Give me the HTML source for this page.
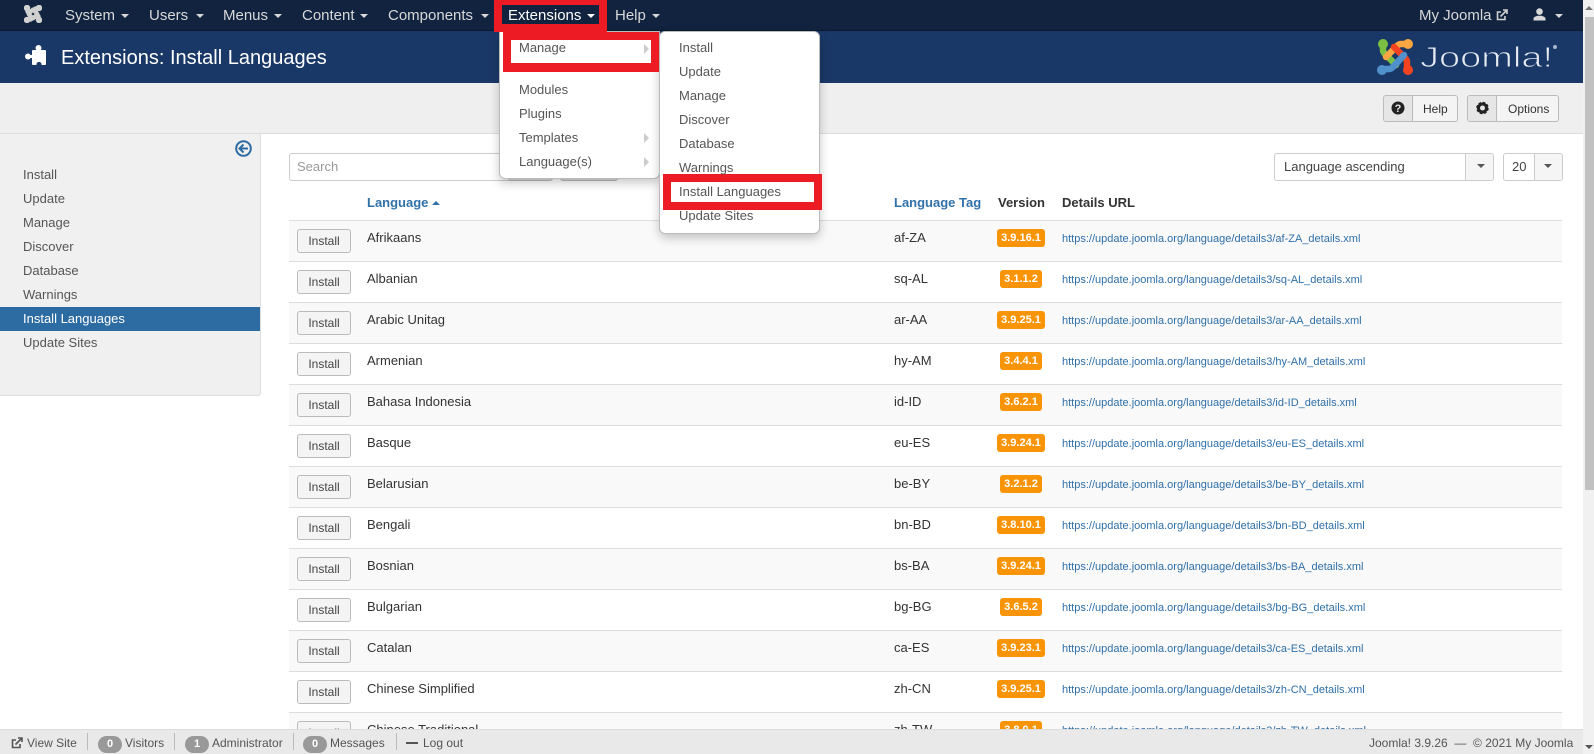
<!DOCTYPE html>
<html lang="en">
<head>
<meta charset="utf-8">
<title>Extensions: Install Languages</title>
<style>
*{box-sizing:border-box}
html,body{margin:0;padding:0;width:1594px;height:754px;overflow:hidden;background:#fff;font-family:"Liberation Sans",Arial,sans-serif;font-size:13px;color:#333}
.a{position:absolute;white-space:nowrap}
#nav{position:absolute;left:0;top:0;width:1583px;height:31px;background:#12233f;border-bottom:1px solid #0c1a30}
.n{position:absolute;top:7px;font-size:15px;line-height:18px;color:#d8d8d8;white-space:nowrap}
.car{position:absolute;width:0;height:0;border-left:4px solid transparent;border-right:4px solid transparent;border-top:4px solid #d8d8d8}
#head{position:absolute;left:0;top:31px;width:1583px;height:52px;background:#1a3867}
#tool{position:absolute;left:0;top:83px;width:1583px;height:51px;background:#efefef;border-bottom:1px solid #ddd}
#side{position:absolute;left:0;top:134px;width:261px;height:262px;background:#f0f0f0;border-right:1px solid #ddd;border-bottom:1px solid #ddd;border-bottom-right-radius:3px}
.si{position:absolute;left:23px;font-size:13px;line-height:18px;color:#555;white-space:nowrap}
.box{position:absolute;border:1px solid #ccc;border-radius:3px;background:#fff}
.tb{position:absolute;top:95px;height:27px;border:1px solid #bbb;border-radius:3px;background:#f4f4f4;font-size:12px;line-height:27px;color:#333;overflow:hidden;white-space:nowrap}
.tb i{position:absolute;left:0;top:0;width:29px;height:25px;background:#e6e6e6;border-right:1px solid #bbb}
.tb span{position:absolute}
#rows{position:absolute;left:289px;top:220px;width:1273px}
.r{position:relative;height:41px;border-top:1px solid #ddd;background:#fff}
.r.o{background:#f9f9f9}
.r b,.r span,.r em,.r u{position:absolute;white-space:nowrap;font-style:normal;text-decoration:none}
.r b{left:8px;top:8px;width:54px;height:24px;border:1px solid #bbb;border-radius:3px;background:#f4f4f4;font-weight:400;font-size:12px;line-height:23px;text-align:center;color:#444}
.r span{top:8px;line-height:17px;font-size:13px;color:#333}
.r em{left:708px;top:8px;height:18px;width:48px;background:#f89406;border-radius:3px;color:#fff;font-weight:700;font-size:11px;line-height:18px;text-align:center}
.r em.s{left:711px;width:42px}
.r u{left:773px;top:10px;font-size:11px;line-height:16px;color:#2f6fa8}
.th{position:absolute;top:194px;font-size:13px;font-weight:700;line-height:18px;white-space:nowrap;color:#333}
.th.l{color:#3071a9}
#foot{position:absolute;left:0;top:729px;width:1583px;height:25px;background:#e9e9e9;border-top:1px solid #ddd;z-index:5;font-size:12px;color:#555}
.f{position:absolute;top:5px;line-height:16px;white-space:nowrap}
.fd{position:absolute;top:3px;width:1px;height:17px;background:#bbb}
.fb{position:absolute;top:6px;width:24px;height:17px;border-radius:9px;background:#999;color:#fff;font-weight:700;font-size:11px;line-height:17px;text-align:center}
#sb{position:absolute;left:1583px;top:0;width:11px;height:754px;background:#f1f1f1;z-index:6}
.dd{position:absolute;background:#fff;border:1px solid #bbb;border-radius:0 0 6px 6px;box-shadow:0 4px 10px rgba(0,0,0,.22);z-index:10}
.di{position:absolute;font-size:13px;line-height:18px;color:#555;white-space:nowrap;z-index:13}
.ar{position:absolute;width:0;height:0;border-top:5px solid transparent;border-bottom:5px solid transparent;border-left:5px solid #ccc;z-index:13}
.red{position:absolute;background:#ed1c24}
</style>
</head>
<body>

<div id="nav"></div>
<svg class="a" style="left:24px;top:5px;z-index:2" width="18" height="18" viewBox="0 0 36 36" fill="none" stroke="#d0d0d0" stroke-width="7" stroke-linecap="round"><path d="M6 6V12Q6 14 8 16L19 27"/><path d="M30 6H24Q22 6 20 8L9 19"/><path d="M30 30V24Q30 22 28 20L17 9"/><path d="M6 30H12Q14 30 16 28L27 17"/><circle cx="6" cy="6" r="3"/><circle cx="30" cy="6" r="3"/><circle cx="30" cy="30" r="3"/><circle cx="6" cy="30" r="3"/><path d="M10 10H26V26H10Z" stroke-width="4" stroke-linecap="butt"/></svg>
<div class="n" style="left:65px">System</div><div class="car" style="left:121px;top:14px"></div>
<div class="n" style="left:149px">Users</div><div class="car" style="left:196px;top:14px"></div>
<div class="n" style="left:223px">Menus</div><div class="car" style="left:274px;top:14px"></div>
<div class="n" style="left:302px">Content</div><div class="car" style="left:360px;top:14px"></div>
<div class="n" style="left:388px">Components</div><div class="car" style="left:481px;top:14px"></div>
<div class="n" style="left:615px">Help</div><div class="car" style="left:652px;top:14px"></div>
<div class="n" style="left:1419px">My Joomla</div>
<svg class="a" style="left:1496px;top:9px" width="12" height="12" viewBox="0 0 12 12" fill="none" stroke="#d0d0d0" stroke-width="1.6"><path d="M9 7V10.5H1.5V3H5"/><path d="M4.5 7.5L10.5 1.5M7 1H11V5"/></svg>
<svg class="a" style="left:1533px;top:8px" width="13" height="13" viewBox="0 0 13 13" fill="#d8d8d8"><circle cx="6.500" cy="3.600" r="3.300"/><path d="M0.500 12.500V10.500Q0.500 8.800 4.500 7.700H8.500Q12.500 8.800 12.500 10.500V12.500Z"/></svg>
<div class="car" style="left:1555px;top:14px"></div>

<div id="head"></div>
<svg class="a" style="left:25px;top:45px" width="21" height="20" viewBox="0 0 21 20" fill="#fff"><rect x="7" y="5" width="14" height="15" rx="1"/><circle cx="13.500" cy="3" r="3"/><circle cx="3" cy="11.500" r="3"/><rect x="3" y="10" width="6" height="3"/><circle cx="14" cy="19.500" r="2.600" fill="#1a3867"/></svg>
<div class="a" style="left:61px;top:46px;font-size:20px;line-height:24px;color:#fff">Extensions: Install Languages</div>

<svg class="a" style="left:1377px;top:38px" width="181" height="38" viewBox="0 0 181 38" fill="none" stroke-width="6.500" stroke-linecap="round">
<path stroke="#7ac143" d="M6 6V12Q6 14 8 16L19 27"/><circle cx="6" cy="6" r="5" fill="#7ac143" stroke="none"/>
<path stroke="#f9a541" d="M30 6H24Q22 6 20 8L9 19"/><circle cx="31" cy="6" r="5" fill="#f9a541" stroke="none"/>
<path stroke="#f44321" d="M30 31V24Q30 22 28 20L17 9"/><circle cx="31" cy="32" r="5" fill="#f44321" stroke="none"/>
<path stroke="#5091cd" d="M6 31H12Q14 31 16 29L27 17"/><circle cx="5" cy="32" r="5" fill="#5091cd" stroke="none"/>
<text x="43" y="29" font-family="Liberation Sans, sans-serif" font-size="29" fill="#e6ebf2" stroke="#1a3867" stroke-width="0.900" textLength="133" lengthAdjust="spacingAndGlyphs">Joomla!</text>
<circle cx="178" cy="9" r="2" fill="#aab6c8" stroke="none"/>
</svg>

<div id="tool"></div>
<div class="tb" style="left:1383px;width:75px"><i></i><span style="left:39px;top:0">Help</span>
<svg class="a" style="left:7px;top:5px" width="14" height="14" viewBox="0 0 14 14"><circle cx="7" cy="7" r="6.500" fill="#222"/><text x="7" y="11" font-size="11" font-weight="700" font-family="Liberation Sans, sans-serif" fill="#e6e6e6" text-anchor="middle">?</text></svg></div>
<div class="tb" style="left:1467px;width:92px"><i></i><span style="left:40px;top:0">Options</span>
<svg class="a" style="left:8px;top:5px" width="13" height="14" viewBox="0 0 13 14"><circle cx="6.500" cy="7" r="4" fill="none" stroke="#222" stroke-width="3"/><circle cx="6.500" cy="7" r="5" fill="none" stroke="#222" stroke-width="2.500" stroke-dasharray="2.500 1.430"/></svg></div>

<div id="side">
<svg class="a" style="left:235px;top:6px" width="17" height="17" viewBox="0 0 17 17" fill="none" stroke="#2d6ca2"><circle cx="8.500" cy="8.500" r="7.300" stroke-width="2"/><path d="M8.500 4.500L4.500 8.500L8.500 12.500M5 8.500H13" stroke-width="2"/></svg>
<div class="si" style="top:32px">Install</div>
<div class="si" style="top:56px">Update</div>
<div class="si" style="top:80px">Manage</div>
<div class="si" style="top:104px">Discover</div>
<div class="si" style="top:128px">Database</div>
<div class="si" style="top:152px">Warnings</div>
<div class="a" style="left:0;top:173px;width:260px;height:24px;background:#2d6ca2"></div>
<div class="si" style="top:176px;color:#fff;font-weight:400">Install Languages</div>
<div class="si" style="top:200px">Update Sites</div>
</div>

<div class="box" style="left:289px;top:153px;width:262px;height:28px;font-size:13px;line-height:26px;color:#999;padding-left:7px">Search</div>
<div class="a" style="left:508px;top:153px;width:45px;height:28px;background:#ddd;border:1px solid #bbb;border-radius:3px"></div>
<div class="a" style="left:560px;top:153px;width:58px;height:28px;background:#ddd;border:1px solid #bbb;border-radius:3px"></div>

<div class="box" style="left:1274px;top:153px;width:220px;height:28px;font-size:13px;line-height:26px;padding-left:9px;color:#444;overflow:hidden">Language ascending<div class="a" style="left:190px;top:0;width:28px;height:26px;background:#f5f5f5;border-left:1px solid #ccc"></div></div>
<div class="car" style="left:1477px;top:164px;border-top-color:#555"></div>
<div class="box" style="left:1503px;top:153px;width:60px;height:28px;font-size:13px;line-height:26px;padding-left:8px;color:#444;overflow:hidden">20<div class="a" style="left:30px;top:0;width:28px;height:26px;background:#f5f5f5;border-left:1px solid #ccc"></div></div>
<div class="car" style="left:1544px;top:164px;border-top-color:#555"></div>

<div class="th l" style="left:367px">Language</div>
<div class="a" style="left:432px;top:201px;width:0;height:0;border-left:4px solid transparent;border-right:4px solid transparent;border-bottom:4px solid #3071a9"></div>
<div class="th l" style="left:894px">Language Tag</div>
<div class="th" style="left:998px">Version</div>
<div class="th" style="left:1062px">Details URL</div>

<div id="rows">
<div class="r o"><b>Install</b><span style="left:78px">Afrikaans</span><span style="left:605px">af-ZA</span><em>3.9.16.1</em><u>https://update.joomla.org/language/details3/af-ZA_details.xml</u></div>
<div class="r"><b>Install</b><span style="left:78px">Albanian</span><span style="left:605px">sq-AL</span><em class="s">3.1.1.2</em><u>https://update.joomla.org/language/details3/sq-AL_details.xml</u></div>
<div class="r o"><b>Install</b><span style="left:78px">Arabic Unitag</span><span style="left:605px">ar-AA</span><em>3.9.25.1</em><u>https://update.joomla.org/language/details3/ar-AA_details.xml</u></div>
<div class="r"><b>Install</b><span style="left:78px">Armenian</span><span style="left:605px">hy-AM</span><em class="s">3.4.4.1</em><u>https://update.joomla.org/language/details3/hy-AM_details.xml</u></div>
<div class="r o"><b>Install</b><span style="left:78px">Bahasa Indonesia</span><span style="left:605px">id-ID</span><em class="s">3.6.2.1</em><u>https://update.joomla.org/language/details3/id-ID_details.xml</u></div>
<div class="r"><b>Install</b><span style="left:78px">Basque</span><span style="left:605px">eu-ES</span><em>3.9.24.1</em><u>https://update.joomla.org/language/details3/eu-ES_details.xml</u></div>
<div class="r o"><b>Install</b><span style="left:78px">Belarusian</span><span style="left:605px">be-BY</span><em class="s">3.2.1.2</em><u>https://update.joomla.org/language/details3/be-BY_details.xml</u></div>
<div class="r"><b>Install</b><span style="left:78px">Bengali</span><span style="left:605px">bn-BD</span><em>3.8.10.1</em><u>https://update.joomla.org/language/details3/bn-BD_details.xml</u></div>
<div class="r o"><b>Install</b><span style="left:78px">Bosnian</span><span style="left:605px">bs-BA</span><em>3.9.24.1</em><u>https://update.joomla.org/language/details3/bs-BA_details.xml</u></div>
<div class="r"><b>Install</b><span style="left:78px">Bulgarian</span><span style="left:605px">bg-BG</span><em class="s">3.6.5.2</em><u>https://update.joomla.org/language/details3/bg-BG_details.xml</u></div>
<div class="r o"><b>Install</b><span style="left:78px">Catalan</span><span style="left:605px">ca-ES</span><em>3.9.23.1</em><u>https://update.joomla.org/language/details3/ca-ES_details.xml</u></div>
<div class="r"><b>Install</b><span style="left:78px">Chinese Simplified</span><span style="left:605px">zh-CN</span><em>3.9.25.1</em><u>https://update.joomla.org/language/details3/zh-CN_details.xml</u></div>
<div class="r o"><b>Install</b><span style="left:78px">Chinese Traditional</span><span style="left:605px">zh-TW</span><em class="s">3.8.0.1</em><u>https://update.joomla.org/language/details3/zh-TW_details.xml</u></div>
</div>

<div id="foot">
<svg class="a" style="left:11px;top:7px" width="12" height="12" viewBox="0 0 12 12" fill="none" stroke="#555" stroke-width="1.600"><path d="M9 7V10.500H1.500V3H5"/><path d="M4.500 7.500L10.500 1.500M7 1H11V5"/></svg>
<div class="f" style="left:27px">View Site</div><div class="fd" style="left:87px"></div>
<div class="fb" style="left:98px">0</div><div class="f" style="left:125px">Visitors</div><div class="fd" style="left:174px"></div>
<div class="fb" style="left:185px">1</div><div class="f" style="left:212px">Administrator</div><div class="fd" style="left:293px"></div>
<div class="fb" style="left:303px">0</div><div class="f" style="left:330px">Messages</div><div class="fd" style="left:396px"></div>
<div class="a" style="left:406px;top:12px;width:12px;height:2px;background:#555"></div><div class="f" style="left:423px">Log out</div>
<div class="f" style="left:1369px">Joomla! 3.9.26 &nbsp;—&nbsp; © 2021 My Joomla</div>
</div>

<div id="sb">
<div class="a" style="left:2px;top:6px;width:0;height:0;border-left:4px solid transparent;border-right:4px solid transparent;border-bottom:4px solid #777"></div>
<div class="a" style="left:2px;top:17px;width:9px;height:473px;background:#c1c1c1"></div>
<div class="a" style="left:2px;top:745px;width:0;height:0;border-left:4px solid transparent;border-right:4px solid transparent;border-top:4px solid #555"></div>
</div>

<!-- Extensions dropdown -->
<div class="dd" style="left:499px;top:31px;width:161px;height:148px"></div>
<div class="di" style="left:519px;top:39px;color:#555">Manage</div>
<div class="di" style="left:519px;top:81px">Modules</div>
<div class="di" style="left:519px;top:105px">Plugins</div>
<div class="di" style="left:519px;top:129px">Templates</div>
<div class="di" style="left:519px;top:153px">Language(s)</div>
<div class="ar" style="left:644px;top:44px"></div>
<div class="ar" style="left:644px;top:133px"></div>
<div class="ar" style="left:644px;top:157px"></div>

<!-- Manage submenu -->
<div class="dd" style="left:659px;top:31px;width:161px;height:203px;border-radius:6px"></div>
<div class="di" style="left:679px;top:39px">Install</div>
<div class="di" style="left:679px;top:63px">Update</div>
<div class="di" style="left:679px;top:87px">Manage</div>
<div class="di" style="left:679px;top:111px">Discover</div>
<div class="di" style="left:679px;top:135px">Database</div>
<div class="di" style="left:679px;top:159px">Warnings</div>
<div class="di" style="left:679px;top:207px">Update Sites</div>

<!-- red annotation boxes -->
<div class="red" style="left:494px;top:0;width:113px;height:32px;z-index:11"></div>
<div class="a" style="left:502px;top:5px;width:97px;height:19px;background:#12233f;z-index:12"></div>
<div class="n" style="left:508px;top:7px;color:#fff;z-index:13">Extensions</div>
<div class="car" style="left:587px;top:14px;border-top-color:#fff;z-index:13"></div>

<div class="red" style="left:503px;top:32px;width:156px;height:40px;z-index:11"></div>
<div class="a" style="left:511px;top:40px;width:140px;height:23px;background:#fff;z-index:12"></div>

<div class="red" style="left:663px;top:174px;width:159px;height:36px;z-index:11"></div>
<div class="a" style="left:671px;top:182px;width:143px;height:20px;background:#fff;z-index:12"></div>
<div class="di" style="left:679px;top:183px">Install Languages</div>

</body>
</html>
